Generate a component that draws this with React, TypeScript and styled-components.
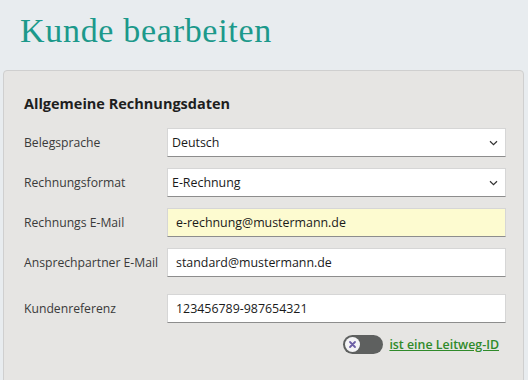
import React from "react";
import styled, { createGlobalStyle } from "styled-components";

const Global = createGlobalStyle`
  html, body { margin: 0; padding: 0; background: #e8ecef; }
  body { font-family: "Open Sans", "Noto Sans", sans-serif; }
`;

const Page = styled.div`
  width: 528px;
  height: 380px;
  overflow: hidden;
  box-sizing: border-box;
  padding: 0 4px 0 3px;
`;

const Title = styled.h1`
  margin: 0;
  padding: 11px 0 0 17px;
  height: 60px;
  box-sizing: border-box;
  font-family: "Liberation Serif", serif;
  font-weight: 400;
  font-size: 34px;
  line-height: 40px;
  letter-spacing: 0.7px;
  color: #1c998b;
`;

const Panel = styled.section`
  margin-top: 10px;
  background: #e6e5e3;
  border: 1px solid #cfcfcf;
  border-radius: 4px;
  padding: 23px 17px 40px 20px;
  min-height: 340px;
  box-sizing: border-box;
`;

const Heading = styled.h2`
  margin: 0 0 14px;
  font-size: 14.5px;
  line-height: 20px;
  font-weight: 700;
  color: #1e1e1e;
`;

const Form = styled.div`
  display: grid;
  grid-template-columns: 143px 1fr;
  row-gap: 11px;
  align-items: center;
`;

const Label = styled.label<{ $gapTop?: boolean }>`
  font-size: 12.2px;
  color: #3a3a3a;
  white-space: nowrap;
  margin-top: ${(p) => (p.$gapTop ? "6px" : "0")};
`;

const fieldBase = `
  height: 29px;
  box-sizing: border-box;
  border: 1px solid #d6d6d6;
  border-bottom: 1px solid #8d8d8d;
  font-family: "Open Sans", "Noto Sans", sans-serif;
  font-size: 12.4px;
  color: #1a1a1a;
  display: flex;
  align-items: center;
`;

const Field = styled.div<{ $highlight?: boolean; $gapTop?: boolean }>`
  ${fieldBase}
  padding: 0 8px;
  background: ${(p) => (p.$highlight ? "#fdfbd0" : "#ffffff")};
  margin-top: ${(p) => (p.$gapTop ? "6px" : "0")};
`;

const Select = styled.div`
  ${fieldBase}
  background: #ffffff;
  padding: 0 7px 0 4px;
  justify-content: space-between;
`;

const ToggleRow = styled.div`
  grid-column: 1 / span 2;
  display: flex;
  justify-content: flex-end;
  align-items: center;
  gap: 6px;
  padding-right: 7px;
  margin-top: 1px;
`;

const Track = styled.span`
  position: relative;
  width: 40px;
  height: 19px;
  border-radius: 10px;
  background: #5e605f;
  display: inline-block;
`;

const Knob = styled.span`
  position: absolute;
  left: 2px;
  top: 2px;
  width: 15px;
  height: 15px;
  border-radius: 50%;
  background: #f4f4f6;
  display: flex;
  align-items: center;
  justify-content: center;
`;

const Link = styled.a`
  font-size: 12.4px;
  font-weight: 600;
  color: #2f8a2a;
  text-decoration: underline;
  cursor: pointer;
`;

const Chevron = () => (
  <svg width="9" height="6" viewBox="0 0 9 6">
    <path d="M1 1.2 L4.5 4.6 L8 1.2" fill="none" stroke="#333" strokeWidth="1.2" />
  </svg>
);

export default function App() {
  return (
    <Page>
      <Global />
      <Title>Kunde bearbeiten</Title>
      <Panel>
        <Heading>Allgemeine Rechnungsdaten</Heading>
        <Form>
          <Label>Belegsprache</Label>
          <Select>
            <span>Deutsch</span>
            <Chevron />
          </Select>
          <Label>Rechnungsformat</Label>
          <Select>
            <span>E-Rechnung</span>
            <Chevron />
          </Select>
          <Label>Rechnungs E-Mail</Label>
          <Field $highlight>e-rechnung@mustermann.de</Field>
          <Label>Ansprechpartner E-Mail</Label>
          <Field>standard@mustermann.de</Field>
          <Label $gapTop>Kundenreferenz</Label>
          <Field $gapTop>123456789-987654321</Field>
          <ToggleRow>
            <Track>
              <Knob>
                <svg width="9" height="9" viewBox="0 0 9 9">
                  <path d="M2 2 L7 7 M7 2 L2 7" stroke="#6d5fa6" strokeWidth="1.8" strokeLinecap="round" />
                </svg>
              </Knob>
            </Track>
            <Link>ist eine Leitweg-ID</Link>
          </ToggleRow>
        </Form>
      </Panel>
    </Page>
  );
}
